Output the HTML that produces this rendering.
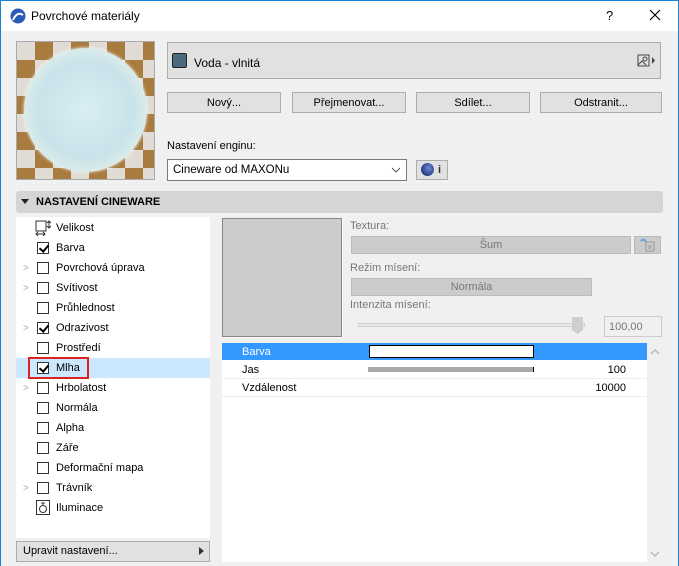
<!DOCTYPE html>
<html><head><meta charset="utf-8"><style>
*{box-sizing:border-box;margin:0;padding:0}
body{width:679px;height:566px;overflow:hidden;background:#f0f0f0;font-family:"Liberation Sans",sans-serif;font-size:11px;color:#000;position:relative}
.a{position:absolute}
.btn{position:absolute;background:#e1e1e1;border:1px solid #adadad;text-align:center;line-height:20px;font-size:11px}
.row{position:absolute;left:16px;width:194px;height:20px;line-height:21px}
.cb{position:absolute;left:21px;top:4px;width:12px;height:12px;border:1px solid #333;background:#fff}
.cb.c::after{content:"";position:absolute;left:3px;top:0px;width:4px;height:7px;border:solid #000;border-width:0 2px 2px 0;transform:rotate(40deg)}
.t{position:absolute;left:40px}
.chev{position:absolute;left:7px;top:0;color:#aaa;font-size:10px}
.lbl{position:absolute;color:#777;font-size:11px}
</style></head><body>
<div class="a" style="left:0;top:0;width:679px;height:566px;border:1px solid #1883d7;border-bottom:none"></div>
<div class="a" style="left:1px;top:1px;width:677px;height:30px;background:#fff"></div>
<svg class="a" style="left:10px;top:8px" width="16" height="16"><circle cx="8" cy="8" r="7.5" fill="#2a5ab8"/><path d="M3 12 Q7 3 13 7" stroke="#fff" stroke-width="2" fill="none"/></svg>
<div class="a" style="left:31px;top:9px;font-size:12px">Povrchové materiály</div>
<div class="a" style="left:606px;top:8px;font-size:13px">?</div>
<svg class="a" style="left:649px;top:9px" width="12" height="12"><path d="M1 1L11 11M11 1L1 11" stroke="#000" stroke-width="1.2"/></svg>

<div class="a" style="left:16px;top:41px;width:139px;height:139px;background:repeating-conic-gradient(#a87b3f 0 25%,#e0dcd5 0 50%) 0 0/36px 36px;border:1px solid #aaa"></div>
<div class="a" style="left:24px;top:48px;width:123px;height:124px;border-radius:50%;background:radial-gradient(circle at 50% 50%,#d8eef2 0,#c9e3ea 55%,#e6f2ea 82%,#fff 92%);box-shadow:0 0 3px #fff"></div>

<div class="a" style="left:167px;top:42px;width:494px;height:37px;background:#e1e1e1;border:1px solid #adadad"></div>
<div class="a" style="left:172px;top:53px;width:15px;height:15px;background:#4a6b7d;border:1px solid #222;border-radius:2px"></div>
<div class="a" style="left:194px;top:56px;font-size:12px">Voda - vlnitá</div>
<svg class="a" style="left:637px;top:54px" width="20" height="14"><rect x="1" y="1" width="11" height="11" fill="none" stroke="#444"/><circle cx="8" cy="5" r="2" fill="none" stroke="#444"/><path d="M1 11L5 7L9 11" stroke="#444" fill="none"/><path d="M15 3L18 6.5L15 10Z" fill="#444"/></svg>

<div class="btn" style="left:167px;top:92px;width:114px;height:21px">Nový...</div>
<div class="btn" style="left:292px;top:92px;width:114px;height:21px">Přejmenovat...</div>
<div class="btn" style="left:416px;top:92px;width:114px;height:21px">Sdílet...</div>
<div class="btn" style="left:540px;top:92px;width:122px;height:21px">Odstranit...</div>

<div class="a" style="left:167px;top:140px">Nastavení enginu:</div>
<div class="a" style="left:167px;top:159px;width:240px;height:22px;background:#fff;border:1px solid #7a7a7a;line-height:21px;padding-left:5px;font-size:11.5px">Cineware od MAXONu</div>
<svg class="a" style="left:391px;top:166px" width="10" height="8"><path d="M1 2L5 6L9 2" stroke="#555" fill="none"/></svg>
<div class="a" style="left:416px;top:160px;width:32px;height:20px;background:#e1e1e1;border:1px solid #adadad"></div>
<div class="a" style="left:421px;top:163px;width:13px;height:13px;border-radius:50%;background:radial-gradient(circle at 60% 40%,#6a8ad8,#0a1a5a)"></div>
<div class="a" style="left:438px;top:164px;font-weight:bold;color:#333">i</div>

<div class="a" style="left:16px;top:191px;width:647px;height:22px;background:#d5d5d5;border-radius:3px"></div>
<svg class="a" style="left:21px;top:199px" width="8" height="6"><path d="M0 0H8L4 5Z" fill="#222"/></svg>
<div class="a" style="left:36px;top:196px;font-weight:bold;font-size:11px">NASTAVENÍ CINEWARE</div>

<div class="a" style="left:16px;top:217px;width:194px;height:321px;background:#fff"></div>
<div class="row" style="top:218px"><svg class="a" style="left:19px;top:2px" width="16" height="16"><rect x="1" y="1" width="10" height="10" fill="none" stroke="#333"/><path d="M14 1V8M12 3L14 1L16 3M12 6L14 8L16 6M1 14H10M3 12L1 14L3 16M8 12L10 14L8 16" stroke="#333" fill="none"/></svg><span class="t">Velikost</span></div>
<div class="row" style="top:238px"><div class="cb c"></div><span class="t">Barva</span></div>
<div class="row" style="top:258px"><span class="chev">&gt;</span><div class="cb"></div><span class="t">Povrchová úprava</span></div>
<div class="row" style="top:278px"><span class="chev">&gt;</span><div class="cb"></div><span class="t">Svítivost</span></div>
<div class="row" style="top:298px"><div class="cb"></div><span class="t">Průhlednost</span></div>
<div class="row" style="top:318px"><span class="chev">&gt;</span><div class="cb c"></div><span class="t">Odrazivost</span></div>
<div class="row" style="top:338px"><div class="cb"></div><span class="t">Prostředí</span></div>
<div class="row" style="top:358px;background:#cce8ff"><div class="cb c"></div><span class="t">Mlha</span></div>
<div class="a" style="left:28px;top:357px;width:61px;height:22px;border:2px solid #e02020"></div>
<div class="row" style="top:378px"><span class="chev">&gt;</span><div class="cb"></div><span class="t">Hrbolatost</span></div>
<div class="row" style="top:398px"><div class="cb"></div><span class="t">Normála</span></div>
<div class="row" style="top:418px"><div class="cb"></div><span class="t">Alpha</span></div>
<div class="row" style="top:438px"><div class="cb"></div><span class="t">Záře</span></div>
<div class="row" style="top:458px"><div class="cb"></div><span class="t">Deformační mapa</span></div>
<div class="row" style="top:478px"><span class="chev">&gt;</span><div class="cb"></div><span class="t">Trávník</span></div>
<div class="row" style="top:498px"><svg class="a" style="left:20px;top:2px" width="14" height="15"><rect x="0.5" y="0.5" width="13" height="14" fill="none" stroke="#333"/><circle cx="7" cy="9" r="3.5" fill="none" stroke="#333"/><path d="M5 3H9M7 3V5" stroke="#333"/></svg><span class="t">Iluminace</span></div>

<div class="btn" style="left:16px;top:541px;width:194px;height:21px;text-align:left;padding-left:6px;line-height:19px">Upravit nastavení...</div>
<svg class="a" style="left:199px;top:547px" width="6" height="8"><path d="M0 0L5 4L0 8Z" fill="#333"/></svg>

<div class="a" style="left:222px;top:218px;width:120px;height:119px;background:#cccccc;border:1px solid #888;box-shadow:1px 1px 0 #fff"></div>
<div class="lbl" style="left:350px;top:220px">Textura:</div>
<div class="a" style="left:351px;top:236px;width:280px;height:18px;background:#cccccc;border:1px solid #bbb;text-align:center;line-height:17px;color:#777">Šum</div>
<div class="a" style="left:634px;top:236px;width:27px;height:18px;background:#cccccc;border:1px solid #bbb"></div>
<svg class="a" style="left:640px;top:238px" width="16" height="14"><path d="M1 3Q4 0 6 4" stroke="#6aa0e0" stroke-width="2" fill="none"/><rect x="6" y="4" width="8" height="9" fill="none" stroke="#999"/><path d="M8 8H12M8 10H12" stroke="#999"/></svg>
<div class="lbl" style="left:350px;top:262px">Režim mísení:</div>
<div class="a" style="left:351px;top:278px;width:241px;height:18px;background:#cccccc;border:1px solid #bbb;text-align:center;line-height:17px;color:#777">Normála</div>
<div class="lbl" style="left:350px;top:299px">Intenzita mísení:</div>
<div class="a" style="left:358px;top:323px;width:227px;height:4px;background:#e8e8e8;border:1px solid #d0d0d0"></div>
<svg class="a" style="left:572px;top:317px" width="12" height="18"><path d="M0 0H11V13L5.5 17L0 13Z" fill="#cfcfcf"/></svg>
<div class="a" style="left:604px;top:316px;width:58px;height:21px;border:1px solid #ccc;background:#f0f0f0;color:#777;line-height:20px;padding-left:4px">100,00</div>

<div class="a" style="left:222px;top:343px;width:425px;height:219px;background:#fff"></div>
<div class="a" style="left:222px;top:343px;width:425px;height:17px;background:#3399ff"></div>
<div class="a" style="left:242px;top:346px;color:#fff">Barva</div>
<div class="a" style="left:369px;top:345px;width:165px;height:13px;background:#fff;border:1px solid #000"></div>
<div class="a" style="left:222px;top:378px;width:425px;height:1px;background:#eee"></div>
<div class="a" style="left:242px;top:364px">Jas</div>
<div class="a" style="left:368px;top:367px;width:166px;height:5px;background:#aaa;border-right:1px solid #000"></div>
<div class="a" style="left:590px;top:364px;width:36px;text-align:right">100</div>
<div class="a" style="left:222px;top:396px;width:425px;height:1px;background:#eee"></div>
<div class="a" style="left:242px;top:382px">Vzdálenost</div>
<div class="a" style="left:580px;top:382px;width:46px;text-align:right">10000</div>
<svg class="a" style="left:650px;top:348px" width="10" height="7"><path d="M1 6L5 2L9 6" stroke="#bbb" stroke-width="1.5" fill="none"/></svg>
<svg class="a" style="left:650px;top:551px" width="10" height="7"><path d="M1 1L5 5L9 1" stroke="#bbb" stroke-width="1.5" fill="none"/></svg>
</body></html>
